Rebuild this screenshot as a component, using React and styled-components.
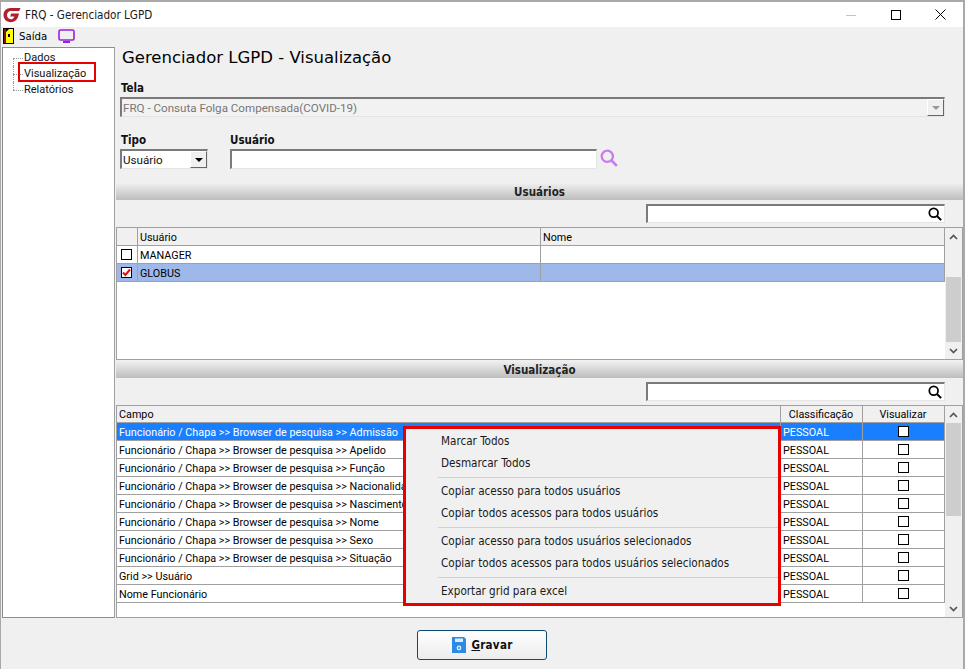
import React from 'react';
import styled, { createGlobalStyle } from 'styled-components';

const thin = 'Roboto, "Liberation Sans", Arial, sans-serif';
const cond = '"DejaVu Sans Condensed", "DejaVu Sans", sans-serif';

const Global = createGlobalStyle`
  html, body { margin: 0; padding: 0; background: #f0f0f0; }
  * { box-sizing: border-box; }
  body { font-family: ${thin}; font-size: 11px; color: #000; }
`;

const Window = styled.div`
  position: relative;
  width: 965px;
  height: 669px;
  overflow: hidden;
  background: #f0f0f0;
  border-top: 2px solid #a9a9a9;
  border-left: 1px solid #a9a9a9;
  border-right: 2px solid #a9a9a9;
`;

const TitleBar = styled.div`
  height: 25px;
  background: #fff;
  display: flex;
  align-items: center;
  padding-left: 2px;
`;

const TitleText = styled.span`
  margin-left: 4px;
  font-family: ${cond};
  font-size: 11.6px;
  color: #1a1a1a;
`;

const WinButtons = styled.div`
  margin-left: auto;
  display: flex;
  align-items: center;
`;

const WinButton = styled.div`
  width: 45px;
  height: 25px;
  display: flex;
  align-items: center;
  justify-content: center;
`;

const Toolbar = styled.div`
  height: 18px;
  display: flex;
  align-items: center;
  padding-left: 2px;
  font-family: ${cond};
  font-size: 11.3px;
`;

const ToolLabel = styled.span`
  margin: 0 11px 0 5px;
`;

const Body = styled.div`
  display: flex;
  height: 574px;
  margin-top: 2px;
`;

const Sidebar = styled.div`
  width: 113px;
  margin-left: 1px;
  height: 571px;
  background: #fff;
  border: 1px solid #8d8d8d;
  border-right-color: #a0a0a0;
  padding-top: 2px;
`;

const TreeItem = styled.div`
  position: relative;
  height: 16px;
  line-height: 16px;
  padding-left: 21px;
  font-size: 11px;
  color: #111;
  &::before {
    content: "";
    position: absolute;
    left: 10px;
    top: 8px;
    width: 10px;
    border-top: 1px dotted #999;
  }
  &::after {
    content: "";
    position: absolute;
    left: 10px;
    top: ${p => (p.$first ? '8px' : '0')};
    height: ${p => (p.$last ? '8px' : '16px')};
    border-left: 1px dotted #999;
  }
`;

const RedMark = styled.div`
  position: absolute;
  left: 17px;
  top: 60px;
  width: 78px;
  height: 20px;
  border: 2px solid #e60000;
`;

const Main = styled.div`
  width: 847px;
  margin-left: 1px;
`;

const Heading = styled.h1`
  margin: 0;
  height: 34px;
  padding: 0 0 0 6px;
  font-size: 16.5px;
  font-weight: 400;
  line-height: 22px;
  font-family: "DejaVu Sans", sans-serif;
`;

const Label = styled.div`
  font-family: ${cond};
  font-weight: 700;
  font-size: 11.5px;
  line-height: 14px;
  padding-left: ${p => (p.$flush ? 0 : 1)}px;
  color: #111;
`;

const Pad = styled.div`
  padding-left: 4px;
`;

const SelectBox = styled.div`
  display: flex;
  align-items: center;
  height: 20px;
  width: ${p => p.$w}px;
  margin-top: 2px;
  background: ${p => (p.$disabled ? '#f2f2f2' : '#fff')};
  color: ${p => (p.$disabled ? '#777' : '#111')};
  border-top: 2px solid #7a7a7a;
  border-left: 2px solid #7a7a7a;
  border-right: 1px solid #e4e4e4;
  border-bottom: 1px solid #e4e4e4;
  padding-left: 1px;
  font-size: 11.6px;
`;

const SelectBtn = styled.div`
  margin-left: auto;
  width: 17px;
  height: 17px;
  background: #f0f0f0;
  border-top: 1px solid #fff;
  border-left: 1px solid #fff;
  border-right: 1px solid #666;
  border-bottom: 1px solid #666;
  display: flex;
  align-items: center;
  justify-content: center;
  &::after {
    content: "";
    border-left: 4px solid transparent;
    border-right: 4px solid transparent;
    border-top: 4px solid ${p => (p.$disabled ? '#999' : '#000')};
  }
`;

const FilterRow = styled.div`
  display: flex;
  margin-top: 16px;
  gap: 22px;
  height: 50px;
`;

const FieldRow = styled.div`
  display: flex;
  align-items: center;
  gap: 3px;
`;

const SectionBar = styled.div`
  height: 17px;
  margin-top: ${p => p.$mt || 0}px;
  line-height: 18px;
  text-align: center;
  font-family: ${cond};
  font-weight: 700;
  font-size: 11.5px;
  color: #222;
  background: linear-gradient(#f0f0f0, #bdbdbd);
`;

const SearchRow = styled.div`
  height: 27px;
  display: flex;
  justify-content: flex-end;
  align-items: center;
  padding-right: 18px;
`;

const SearchBox = styled.div`
  width: 299px;
  height: 19px;
  background: #fff;
  border-top: 2px solid #7a7a7a;
  border-left: 2px solid #7a7a7a;
  border-right: 1px solid #e4e4e4;
  border-bottom: 1px solid #e4e4e4;
  display: flex;
  align-items: center;
  justify-content: flex-end;
  padding-right: 2px;
`;

const Grid = styled.div`
  display: flex;
  height: ${p => p.$h}px;
  background: #fff;
  border: 1px solid #a0a0a0;
`;

const Table = styled.div`
  flex: 1;
  min-width: 0;
`;

const Row = styled.div`
  display: grid;
  grid-template-columns: ${p => p.$cols};
  height: ${p => p.$h || 18}px;
  background: ${p => p.$bg || '#fff'};
  color: ${p => p.$fg || '#000'};
  border-bottom: 1px solid #a0a0a0;
`;

const Cell = styled.div`
  display: flex;
  align-items: center;
  justify-content: ${p => (p.$center ? 'center' : 'flex-start')};
  padding: ${p => (p.$center ? '0 1px 0 0' : '1px 0 0 2px')};
  border-right: 1px solid #a0a0a0;
  font-size: 10.8px;
  white-space: nowrap;
  overflow: hidden;
`;

const Check = styled.div`
  width: 11px;
  height: 11px;
  border: 1px solid #000;
  background: ${p => (p.$white ? '#fff' : 'transparent')};
  display: flex;
  align-items: center;
  justify-content: center;
`;

const Scrollbar = styled.div`
  width: 17px;
  flex: none;
  background: #f0f0f0;
  display: flex;
  flex-direction: column;
  align-items: center;
`;

const ScrollArrow = styled.div`
  height: 17px;
  width: 100%;
  flex: none;
  display: flex;
  align-items: center;
  justify-content: center;
`;

const ScrollTrack = styled.div`
  flex: 1;
  width: 100%;
  min-height: 0;
`;

const ScrollThumb = styled.div`
  height: ${p => p.$h}px;
  margin: ${p => p.$top}px 1px 0;
  background: #cdcdcd;
`;

const ContextMenu = styled.div`
  position: absolute;
  left: 402px;
  top: 424px;
  width: 378px;
  height: 180px;
  border: 3px solid #e60000;
  background: #f0f0f0;
  padding: 1px 0 0 4px;
`;

const MenuItem = styled.div`
  height: 22px;
  line-height: 22px;
  padding-left: 31px;
  font-family: ${cond};
  font-size: 11.6px;
  color: #1a1a1a;
`;

const MenuSep = styled.div`
  height: 1px;
  margin: 3px 0 2px 28px;
  background: #d0d0d0;
`;

const Footer = styled.div`
  display: flex;
  padding-left: 301px;
  margin-top: 12px;
`;

const SaveButton = styled.button`
  width: 130px;
  height: 30px;
  display: flex;
  align-items: center;
  justify-content: center;
  gap: 5px;
  border: 1px solid #0f4a74;
  border-radius: 3px;
  background: linear-gradient(#ffffff, #ececec);
  font: 700 11.5px ${cond};
  letter-spacing: 0.3px;
  color: #111;
  padding: 0 0 0 1px;
  u { text-decoration: underline; }
`;

const Lens = ({ color = '#000', size = 16, w = 2 }) => (
  <svg width={size} height={size} viewBox="0 0 16 16" fill="none">
    <circle cx="6.5" cy="6.5" r="5" stroke={color} strokeWidth={w} />
    <path d="M10.2 10.2 L15 15" stroke={color} strokeWidth={w + 0.4} />
  </svg>
);

const Logo = () => (
  <svg width="18" height="16" viewBox="0 0 19 17">
    <path d="M18.5 1 H8 C3.5 1 0.5 4.2 0.5 8.6 C0.5 13 3.5 16.2 8.2 16.2 C12 16.2 14.6 14.2 15.8 11 L17 7 H8.6 L7.6 10 H12 C11.3 12 10 13 8.4 13 C5.9 13 4.2 11.2 4.2 8.6 C4.2 6 5.9 4.2 8.4 4.2 H17.2 Z" fill="#b0202e" />
  </svg>
);

const Door = () => (
  <svg width="11" height="16" viewBox="0 0 11 16">
    <rect x="0" y="0" width="11" height="16" fill="#000" />
    <rect x="1" y="1" width="2" height="14" fill="#7a1414" />
    <path d="M3 4 L6 1 H10 V15 H3 Z" fill="#ffff00" />
    <rect x="5" y="6" width="2" height="3" fill="#000" />
  </svg>
);

const Monitor = () => (
  <svg width="17" height="14" viewBox="0 0 17 14" fill="none">
    <rect x="1" y="1" width="15" height="10" rx="1.5" stroke="#9a1ee6" strokeWidth="1.6" />
    <rect x="5" y="12" width="7" height="2" fill="#9a1ee6" />
  </svg>
);

const Floppy = () => (
  <svg width="14" height="16" viewBox="0 0 14 16">
    <path d="M0 0 H12 L14 2 V16 H0 Z" fill="#2a8ae6" />
    <rect x="3" y="1.5" width="8" height="3.5" fill="#d8ecfc" />
    <circle cx="7" cy="11" r="2.4" fill="#d8ecfc" />
    <circle cx="7" cy="11" r="1" fill="#2a8ae6" />
  </svg>
);

const RedTick = () => (
  <svg width="9" height="9" viewBox="0 0 9 9" fill="none">
    <path d="M1 4.5 L3.4 7 L8 1.5" stroke="#e01010" strokeWidth="2" />
  </svg>
);

const Chevron = ({ up }) => (
  <svg width="9" height="6" viewBox="0 0 9 6" fill="none">
    <path d={up ? 'M1 5 L4.5 1.5 L8 5' : 'M1 1 L4.5 4.5 L8 1'} stroke="#555" strokeWidth="1.7" />
  </svg>
);

const userCols = '21px 403px 1fr';
const fieldCols = '664px 82px 1fr';
const prefix = 'Funcionário / Chapa >> Browser de pesquisa >> ';

const fields = [
  prefix + 'Admissão',
  prefix + 'Apelido',
  prefix + 'Função',
  prefix + 'Nacionalidade',
  prefix + 'Nascimento',
  prefix + 'Nome',
  prefix + 'Sexo',
  prefix + 'Situação',
  'Grid >> Usuário',
  'Nome Funcionário',
];

export default function App() {
  return (
    <Window>
      <Global />
      <TitleBar>
        <Logo />
        <TitleText>FRQ - Gerenciador LGPD</TitleText>
        <WinButtons>
          <WinButton>
            <svg width="10" height="10" viewBox="0 0 10 10"><path d="M0 5.5 H10" stroke="#c4c4c4" /></svg>
          </WinButton>
          <WinButton>
            <svg width="10" height="10" viewBox="0 0 10 10" fill="none"><rect x="0.5" y="0.5" width="9" height="9" stroke="#000" /></svg>
          </WinButton>
          <WinButton>
            <svg width="11" height="11" viewBox="0 0 11 11" fill="none"><path d="M0.5 0.5 L10.5 10.5 M10.5 0.5 L0.5 10.5" stroke="#000" /></svg>
          </WinButton>
        </WinButtons>
      </TitleBar>
      <Toolbar>
        <Door />
        <ToolLabel>Saída</ToolLabel>
        <Monitor />
      </Toolbar>
      <Body>
        <Sidebar>
          <TreeItem $first>Dados</TreeItem>
          <TreeItem>Visualização</TreeItem>
          <TreeItem $last>Relatórios</TreeItem>
        </Sidebar>
        <Main>
          <Heading>Gerenciador LGPD - Visualização</Heading>
          <Pad>
            <Label>Tela</Label>
            <SelectBox $w={825} $disabled>
              FRQ - Consuta Folga Compensada(COVID-19)
              <SelectBtn $disabled />
            </SelectBox>
            <FilterRow>
              <div>
                <Label>Tipo</Label>
                <SelectBox $w={88}>
                  Usuário
                  <SelectBtn />
                </SelectBox>
              </div>
              <div>
                <Label $flush>Usuário</Label>
                <FieldRow>
                  <SelectBox $w={367} />
                  <Lens color="#c77df0" size={18} />
                </FieldRow>
              </div>
            </FilterRow>
          </Pad>
          <SectionBar>Usuários</SectionBar>
          <SearchRow>
            <SearchBox><Lens size={14} /></SearchBox>
          </SearchRow>
          <Grid $h={133}>
            <Table>
              <Row $cols={userCols} $bg="#f0f0f0">
                <Cell />
                <Cell>Usuário</Cell>
                <Cell>Nome</Cell>
              </Row>
              <Row $cols={userCols}>
                <Cell $center><Check /></Cell>
                <Cell>MANAGER</Cell>
                <Cell />
              </Row>
              <Row $cols={userCols} $bg="#9eb9e9">
                <Cell $center><Check $white><RedTick /></Check></Cell>
                <Cell>GLOBUS</Cell>
                <Cell />
              </Row>
            </Table>
            <Scrollbar>
              <ScrollArrow><Chevron up /></ScrollArrow>
              <ScrollTrack><ScrollThumb $top={32} $h={65} /></ScrollTrack>
              <ScrollArrow><Chevron /></ScrollArrow>
            </Scrollbar>
          </Grid>
          <SectionBar $mt={1}>Visualização</SectionBar>
          <SearchRow>
            <SearchBox><Lens size={14} /></SearchBox>
          </SearchRow>
          <Grid $h={213}>
            <Table>
              <Row $cols={fieldCols} $bg="#f0f0f0" $h={17}>
                <Cell>Campo</Cell>
                <Cell $center>Classificação</Cell>
                <Cell $center>Visualizar</Cell>
              </Row>
              {fields.map((f, i) => (
                <Row key={f} $cols={fieldCols} $bg={i === 0 ? '#1a7fff' : undefined} $fg={i === 0 ? '#fff' : undefined}>
                  <Cell>{f}</Cell>
                  <Cell>PESSOAL</Cell>
                  <Cell $center><Check $white={i === 0} /></Cell>
                </Row>
              ))}
            </Table>
            <Scrollbar>
              <ScrollArrow><Chevron up /></ScrollArrow>
              <ScrollTrack><ScrollThumb $top={0} $h={93} /></ScrollTrack>
              <ScrollArrow><Chevron /></ScrollArrow>
            </Scrollbar>
          </Grid>
          <Footer>
            <SaveButton>
              <Floppy />
              <span><u>G</u>ravar</span>
            </SaveButton>
          </Footer>
        </Main>
      </Body>
      <RedMark />
      <ContextMenu>
        <MenuItem>Marcar Todos</MenuItem>
        <MenuItem>Desmarcar Todos</MenuItem>
        <MenuSep />
        <MenuItem>Copiar acesso para todos usuários</MenuItem>
        <MenuItem>Copiar todos acessos para todos usuários</MenuItem>
        <MenuSep />
        <MenuItem>Copiar acesso para todos usuários selecionados</MenuItem>
        <MenuItem>Copiar todos acessos para todos usuários selecionados</MenuItem>
        <MenuSep />
        <MenuItem>Exportar grid para excel</MenuItem>
      </ContextMenu>
    </Window>
  );
}
